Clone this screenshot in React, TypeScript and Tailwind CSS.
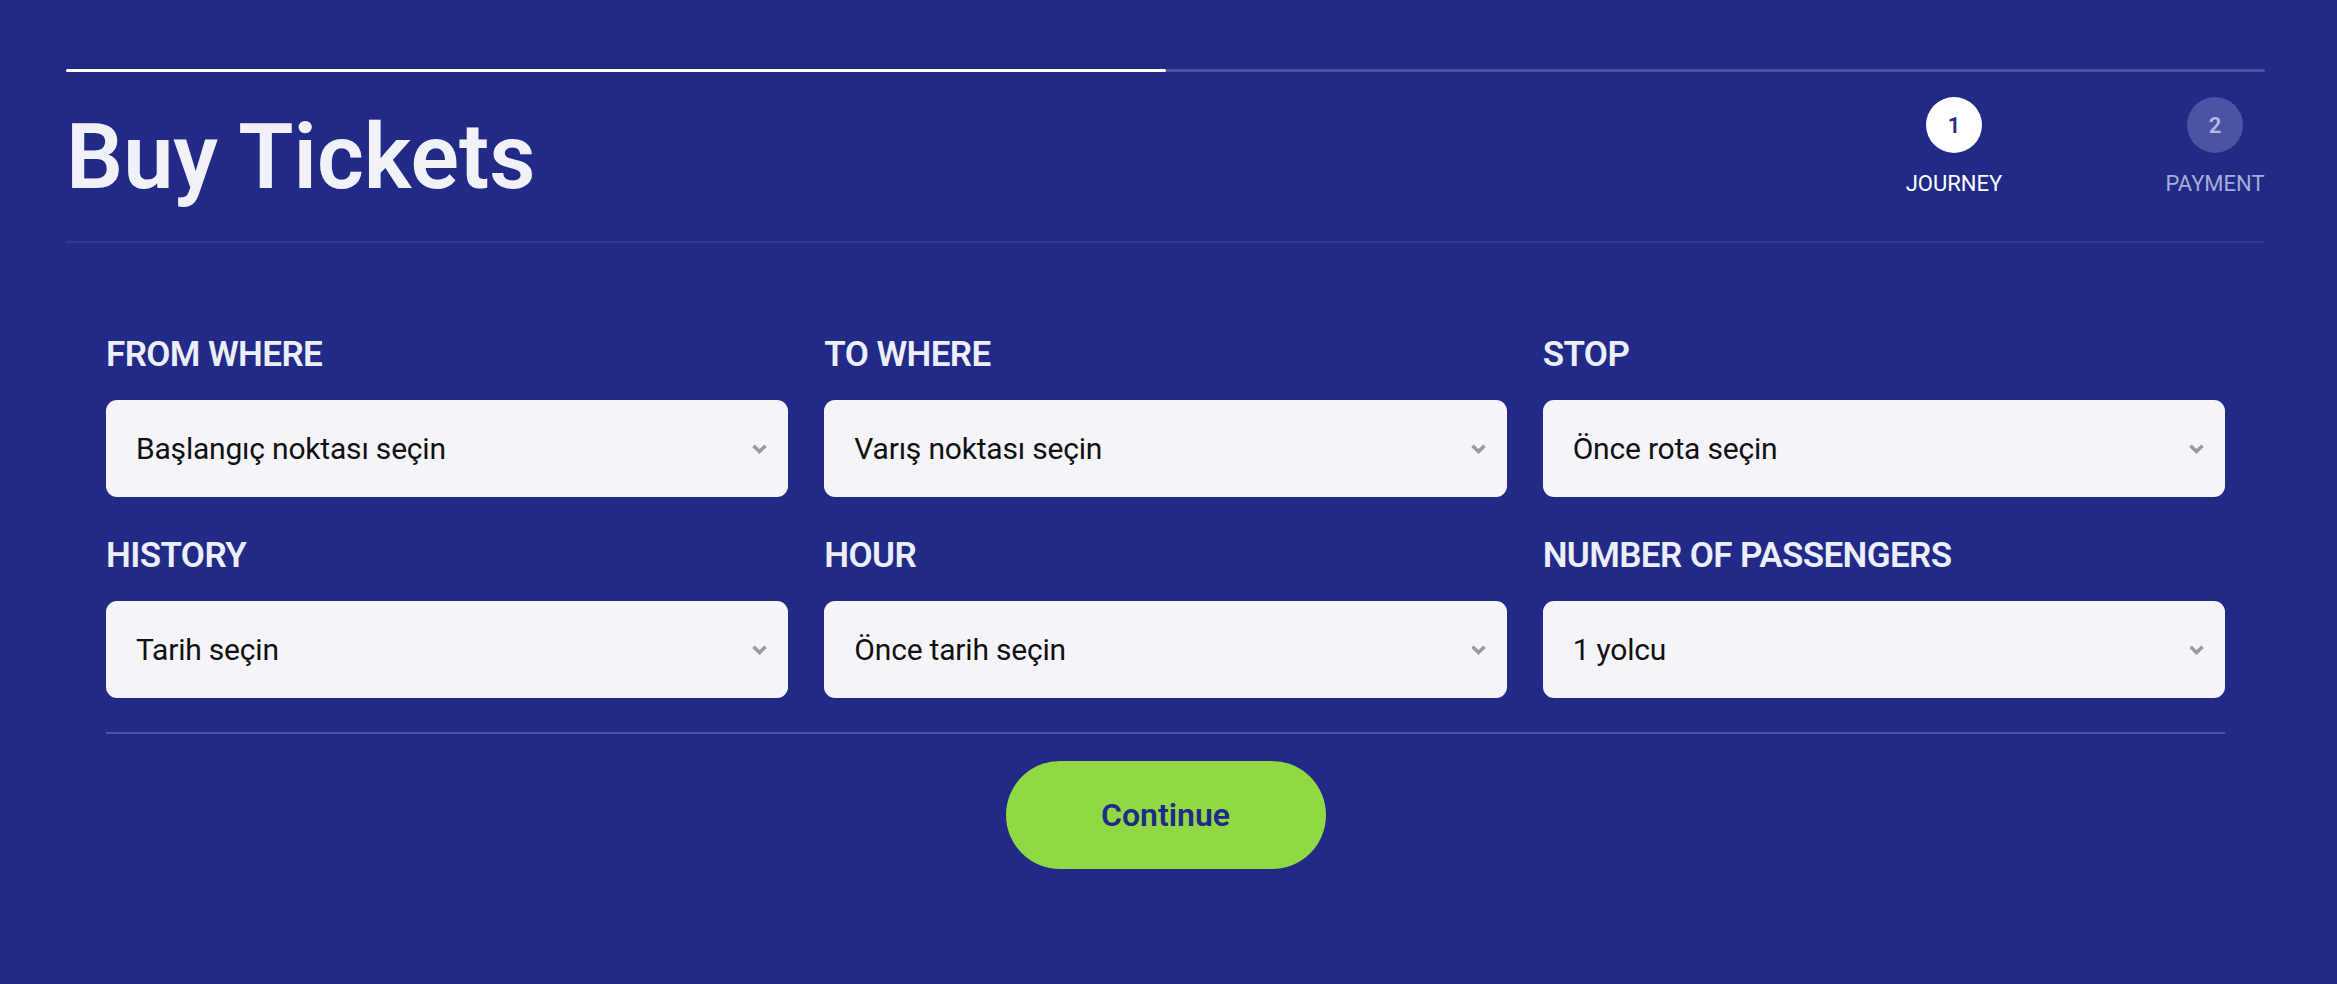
import { useState } from 'react'

const fields = [
  { label: 'FROM WHERE', placeholder: 'Başlangıç noktası seçin' },
  { label: 'TO WHERE', placeholder: 'Varış noktası seçin' },
  { label: 'STOP', placeholder: 'Önce rota seçin' },
  { label: 'HISTORY', placeholder: 'Tarih seçin' },
  { label: 'HOUR', placeholder: 'Önce tarih seçin' },
  { label: 'NUMBER OF PASSENGERS', placeholder: '1 yolcu' },
]

function Chevron() {
  return (
    <svg width="15" height="10" viewBox="0 0 15 10" className="shrink-0">
      <polyline points="1.5,1.8 7.5,7.5 13.5,1.8" fill="none" stroke="#9a9aa2" strokeWidth="3.6" />
    </svg>
  )
}

function SelectField({ label, placeholder }: { label: string; placeholder: string }) {
  return (
    <div className="flex flex-col">
      <span className="text-[35px] font-semibold leading-[41px] tracking-[-0.6px] text-[#eceefa]">{label}</span>
      <button className="mt-[25px] flex h-[97px] w-full items-center justify-between rounded-[11px] bg-[#f4f4f9] pl-[30px] pr-[21px] text-left">
        <span className="text-[30px] tracking-[-0.2px] text-[#111]">{placeholder}</span>
        <Chevron />
      </button>
    </div>
  )
}

function Step({ n, label, active }: { n: number; label: string; active?: boolean }) {
  return (
    <div className="flex w-[100px] flex-col items-center">
      <div
        className={
          active
            ? 'flex h-[56px] w-[56px] items-center justify-center rounded-full bg-white text-[22px] font-semibold text-[#222a87]'
            : 'flex h-[56px] w-[56px] items-center justify-center rounded-full bg-[#4b53a3] text-[22px] font-semibold text-[#b6bbe2]'
        }
      >
        {n}
      </div>
      <span
        className={
          active
            ? 'mt-[18px] whitespace-nowrap text-[22px] leading-[26px] text-white'
            : 'mt-[18px] whitespace-nowrap text-[22px] leading-[26px] text-[#a7acd8]'
        }
      >
        {label}
      </span>
    </div>
  )
}

export default function App() {
  const [step] = useState(1)

  return (
    <div className="h-screen w-full overflow-hidden bg-[#212a86] pl-[66px] pr-[72px] pt-[69px] font-['Roboto','Liberation_Sans',sans-serif]">
      <div className="h-[3px] w-full rounded-full bg-[#4b54a4]">
        <div className="h-full w-1/2 rounded-full bg-white" />
      </div>

      <div className="flex h-[171px] items-start justify-between border-b-2 border-[#2f3893] pt-[25px]">
        <h1 className="mt-[16px] text-[90px] font-semibold leading-[90px] text-[#f1f1f8]">Buy Tickets</h1>
        <div className="flex gap-[161px]">
          <Step n={1} label="JOURNEY" active={step === 1} />
          <Step n={2} label="PAYMENT" active={step === 2} />
        </div>
      </div>

      <div className="px-[40px] pt-[91px]">
        <div className="grid grid-cols-3 gap-x-[36px] gap-y-[38px]">
          {fields.map((f) => (
            <SelectField key={f.label} label={f.label} placeholder={f.placeholder} />
          ))}
        </div>
        <div className="mt-[34px] h-[2px] w-full bg-[#4a53a6]" />
        <div className="flex justify-center pt-[27px]">
          <button className="h-[108px] w-[320px] rounded-full bg-[#90d944] text-[32px] font-semibold text-[#222a87]">
            Continue
          </button>
        </div>
      </div>
    </div>
  )
}
